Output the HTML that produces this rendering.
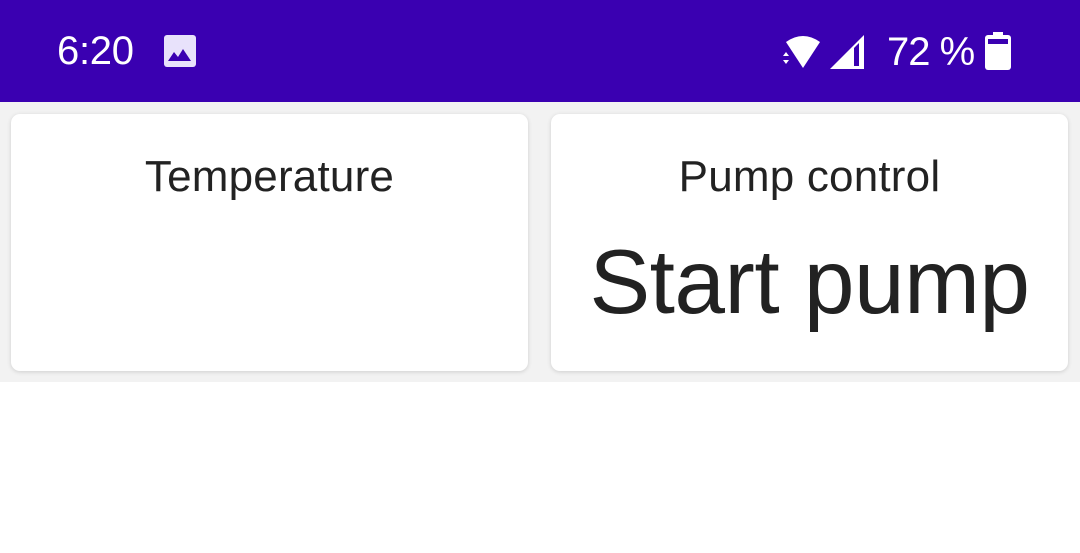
<!DOCTYPE html>
<html><head><style>
body{margin:0;width:1080px;height:553px;background:#fff;font-family:"Liberation Sans",sans-serif;overflow:hidden;position:relative}
.bar{position:absolute;left:0;top:0;width:1080px;height:102px;background:#3a00b1;color:#fff}
.area{position:absolute;left:0;top:102px;width:1080px;height:280px;background:#f2f2f2}
.card{position:absolute;top:114px;width:517px;height:257px;background:#fff;border-radius:9px;box-shadow:0 1px 4px rgba(0,0,0,.15);text-align:center;color:#222}
.t{position:absolute;left:0;right:0;font-size:44px;line-height:50px;letter-spacing:0.2px;font-weight:300}
</style></head><body>
<div class="bar">
<div style="position:absolute;left:57px;top:29px;font-size:40px;letter-spacing:-0.3px">6:20</div>
<svg style="position:absolute;left:164px;top:35px" width="32" height="32" viewBox="0 0 32 32"><rect x="0" y="0" width="32" height="32" rx="3" fill="#e8e2fb"/><path d="M4 26 L10 17 L14 22 L19 14 L27 26Z" fill="#3a00b1"/></svg>
<svg style="position:absolute;left:780px;top:34px" width="46" height="36" viewBox="0 0 46 36"><path d="M6 8 Q23 -4 40 8 L23 34Z" fill="#fff"/><path d="M3 22 L6 18 L9 22Z M3 26 L9 26 L6 30Z" fill="#fff"/></svg>
<svg style="position:absolute;left:828px;top:33px" width="38" height="38" viewBox="0 0 38 38"><path d="M2 36 L36 2 L36 36Z" fill="#fff"/><path d="M26 15 L26 33 L31 33 L31 10Z" fill="#3a00b1"/></svg>
<div style="position:absolute;left:887px;top:30px;font-size:40px;letter-spacing:-1px">72 %</div>
<svg style="position:absolute;left:985px;top:32px" width="26" height="38" viewBox="0 0 26 38"><rect x="8" y="0" width="10" height="4" fill="#fff"/><rect x="0" y="3" width="26" height="35" rx="3" fill="#fff"/><rect x="3" y="7" width="20" height="5" fill="#3a00b1"/></svg>
</div>
<div class="area"></div>
<div class="card" style="left:11px"><div class="t" style="top:38px">Temperature</div></div>
<div class="card" style="left:551px"><div class="t" style="top:38px">Pump control</div>
<div style="position:absolute;left:0;right:0;top:116px;font-size:91px;line-height:106px;letter-spacing:-0.5px">Start pump</div></div>
</body></html>
